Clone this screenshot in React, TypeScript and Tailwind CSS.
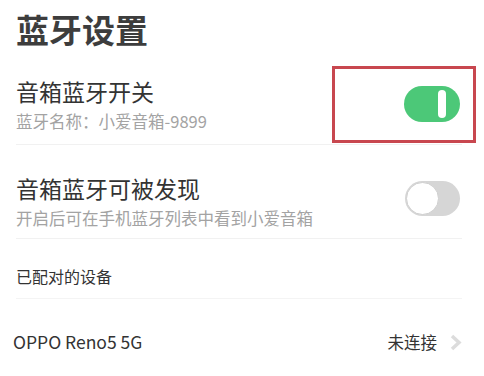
export default function App() {
  return (
    <div
      className="relative w-[484px] h-[376px] bg-white overflow-hidden"
      style={{ fontFamily: '"Noto Sans CJK SC", "Noto Sans", sans-serif' }}
    >
      <div className="pl-4 pr-[22px]">
        <div className="pt-[13px] text-[33px] leading-[33px] font-bold text-[#3d3d3d]">蓝牙设置</div>

        <div className="flex items-center justify-between pt-[30px] pb-[8px] border-b border-[#f1f1f1]">
          <div className="flex flex-col">
            <span className="text-[23px] leading-[30px] text-[#333]">音箱蓝牙开关</span>
            <span className="text-[16.5px] leading-[30px] text-[#a3a3a3]">蓝牙名称：小爱音箱-9899</span>
          </div>
          <div className="mr-[2px] -mt-[5px] w-[56px] h-[36px] rounded-full bg-[#4cc878] flex items-center justify-end pr-[14px]">
            <div className="w-[8px] h-[28px] rounded-full bg-white" />
          </div>
        </div>

        <div className="flex items-center justify-between pt-[28px] pb-[5px] border-b border-[#f1f1f1]">
          <div className="flex flex-col">
            <span className="text-[23px] leading-[30px] text-[#333]">音箱蓝牙可被发现</span>
            <span className="text-[16.5px] leading-[30px] text-[#a3a3a3]">开启后可在手机蓝牙列表中看到小爱音箱</span>
          </div>
          <div className="mr-[2px] -mt-[10px] w-[55px] h-[35px] rounded-full bg-[#d6d6d6] flex items-center pl-[1px]">
            <div className="w-[33px] h-[33px] rounded-full bg-white border border-[#cfcfcf]" />
          </div>
        </div>

        <div className="h-[60px] flex items-center border-b border-[#f4f4f4] pt-[14px]">
          <span className="text-[16px] text-[#333]">已配对的设备</span>
        </div>

        <div className="h-[78px] flex items-center justify-between -ml-[3px] pt-[8px]">
          <span className="text-[17.5px] text-[#333]">OPPO Reno5 5G</span>
          <div className="flex items-center gap-[13px]">
            <span className="text-[16.5px] text-[#333]">未连接</span>
            <svg width="12" height="17" viewBox="0 0 12 17">
              <path d="M2 2 L9 8.5 L2 15" fill="none" stroke="#dcdcdc" strokeWidth="3.5" />
            </svg>
          </div>
        </div>
      </div>

      <div className="absolute left-[332px] top-[66px] w-[144px] h-[77px] border-[3px] border-[#c8474f]" />
    </div>
  );
}
